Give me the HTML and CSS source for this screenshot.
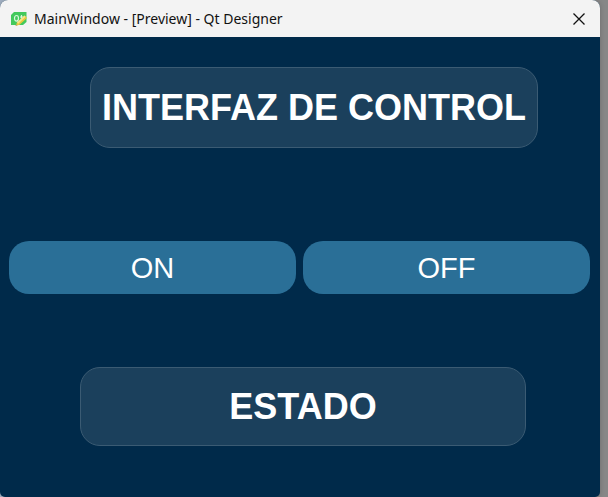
FILE: index.html
```html
<!DOCTYPE html>
<html lang="es">
<head>
<meta charset="utf-8">
<title>MainWindow - [Preview] - Qt Designer</title>
<link rel="stylesheet" href="styles.css">
</head>
<body>
<div class="window">
  <header class="titlebar">
    <svg class="app-icon" viewBox="0 0 18 18" aria-hidden="true">
      <path d="M4 2H16.500V12L13 15H1V5Z" fill="#43c95c"/>
      <ellipse cx="6.500" cy="8.300" rx="2" ry="2.800" fill="none" stroke="#d9f7dc" stroke-width="1.200"/>
      <path d="M7 10L8.600 12M11.500 5V10.500M10 7H13.500" fill="none" stroke="#d9f7dc" stroke-width="1.200"/>
      <path d="M5.500 16L7 12.500L14.500 5.500L17 8L9.500 14.800Z" fill="#e9c93b"/>
      <path d="M7 12.500L14.500 5.500L15.700 6.700L8.200 13.700Z" fill="#f6e58a"/>
      <path d="M5.500 16L6.300 14L7.500 15.300Z" fill="#a8a27c"/>
    </svg>
    <h1 class="caption">MainWindow - [Preview] - Qt Designer</h1>
    <button class="close" type="button" aria-label="Close">
      <svg class="close-icon" viewBox="0 0 12 12" aria-hidden="true"><path d="M0.500 0.500L11.500 11.500M11.500 0.500L0.500 11.500" fill="none" stroke="#111" stroke-width="1.300"/></svg>
    </button>
  </header>
  <main class="content">
    <h2 class="panel panel-title">INTERFAZ DE CONTROL</h2>
    <div class="actions">
      <button class="action" type="button">ON</button>
      <button class="action" type="button">OFF</button>
    </div>
    <p class="panel panel-status">ESTADO</p>
  </main>
</div>
</body>
</html>
```
FILE: styles.css
```css
* {
  box-sizing: border-box;
}

body {
  margin: 0;
  min-height: 100vh;
  display: flex;
  padding-right: 8px;
  background: linear-gradient(to right, #a3b2c4 50%, #878787 50%);
}

.window {
  flex: 1;
  display: flex;
  flex-direction: column;
  border-radius: 8px 8px 5px 5px;
  overflow: hidden;
  background: #002a4a;
  box-shadow: 0 0 5px rgba(0, 0, 0, 0.2);
}

.titlebar {
  display: flex;
  align-items: center;
  height: 37px;
  padding: 0 8px 0 10px;
  background: #f3f3f3;
}

.app-icon {
  width: 18px;
  height: 18px;
}

.caption {
  flex: 1;
  margin: 0 0 0 6px;
  font: 400 14px "Segoe UI", "Noto Sans", sans-serif;
  color: #111;
}

.close {
  display: flex;
  padding: 7px;
  border: 0;
  background: none;
}

.close-icon {
  width: 12px;
  height: 12px;
}

.content {
  flex: 1;
  display: flex;
  flex-direction: column;
  padding: 30px 10px 51px 9px;
  font-family: Arial, "Liberation Sans", sans-serif;
  color: #fff;
}

.panel {
  display: flex;
  align-items: center;
  justify-content: center;
  margin: 0;
  border: 1px solid #3b5b73;
  border-radius: 20px;
  background: #1b405c;
  font-size: 36px;
  font-weight: 700;
  line-height: 43px;
  white-space: nowrap;
}

.panel-title {
  margin: 0 52px 0 81px;
  padding: 18px 0;
}

.panel-status {
  margin: 0 64px 0 71px;
  padding: 17px 0;
}

.actions {
  flex: 1;
  display: grid;
  grid-template-columns: 1fr 1fr;
  align-items: center;
  gap: 7px;
  padding-top: 20px;
}

.action {
  height: 53px;
  padding: 2px 0 0;
  border: 0;
  border-radius: 20px;
  background: #2a6f97;
  color: #fff;
  font: 400 29px Arial, "Liberation Sans", sans-serif;
}
```
